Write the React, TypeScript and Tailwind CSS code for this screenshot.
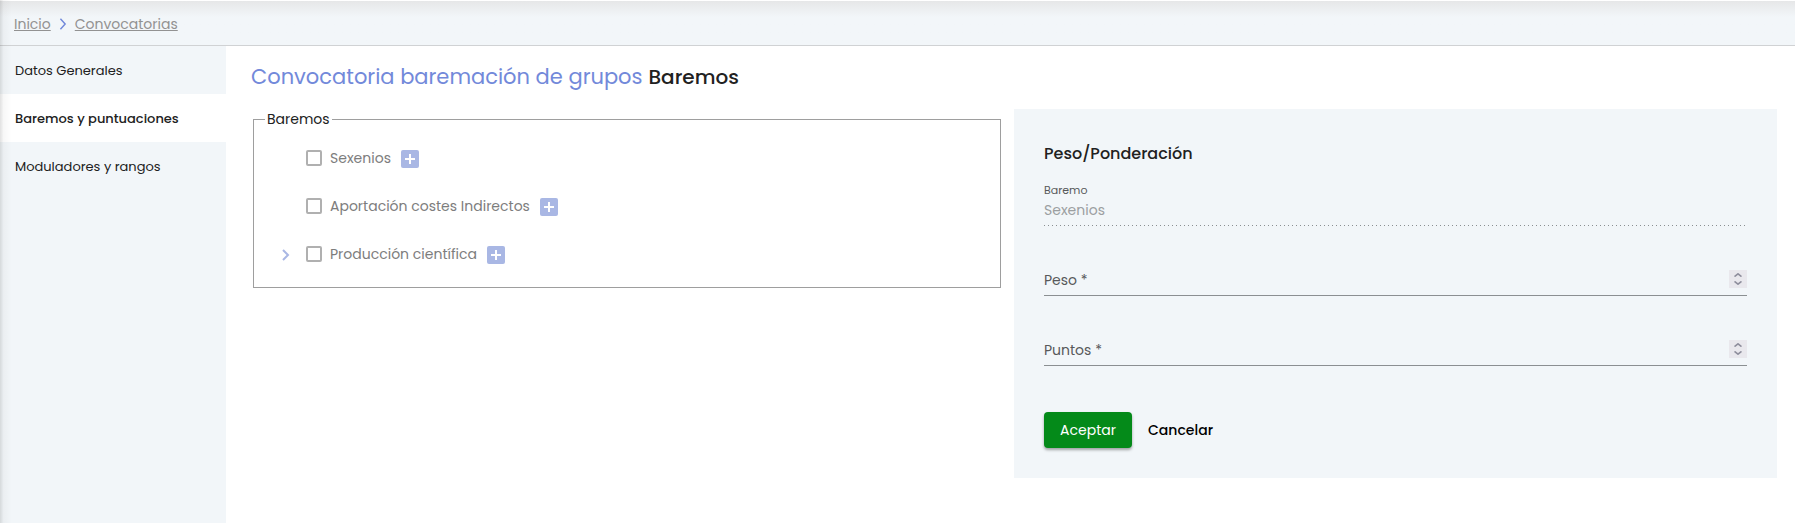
import React from "react";

const sections = [
  { label: "Datos Generales", active: false },
  { label: "Baremos y puntuaciones", active: true },
  { label: "Moduladores y rangos", active: false },
];

const scales = [
  { id: "sexenios", label: "Sexenios", expandable: false },
  { id: "costes", label: "Aportación costes Indirectos", expandable: false },
  { id: "produccion", label: "Producción científica", expandable: true },
];

function Chevron({ className }: { className: string }) {
  return (
    <svg viewBox="0 0 8 14" fill="none" stroke="currentColor" className={className} aria-hidden="true">
      <path d="M1 1l5.5 6L1 13" strokeWidth="1.7" />
    </svg>
  );
}

function TreeRow({ id, label, expandable }: { id: string; label: string; expandable: boolean }) {
  return (
    <li className="flex h-12 items-center">
      <span className="flex w-[41px] justify-center">
        {expandable && (
          <button type="button" aria-label={`Desplegar ${label}`} className="mt-[2px] text-[#a9b7e4]">
            <svg viewBox="0 0 8 12" fill="none" stroke="currentColor" className="h-3 w-2" aria-hidden="true">
              <path d="M1 1l5 5-5 5" strokeWidth="2" />
            </svg>
          </button>
        )}
      </span>
      <input
        id={id}
        type="checkbox"
        className="size-4 appearance-none rounded-[2px] border-2 border-[#b0b0b0] bg-white checked:bg-[#7289da]"
      />
      <label htmlFor={id} className="ml-2 text-[14px] leading-5 text-[#7d7d7d]">
        {label}
      </label>
      <button
        type="button"
        aria-label={`Añadir a ${label}`}
        className="ml-[10px] mt-[2px] flex size-[18px] items-center justify-center rounded-[2px] bg-[#a9b7e4] text-white"
      >
        <svg viewBox="0 0 10 10" stroke="currentColor" className="size-[10px]" aria-hidden="true">
          <path d="M5 0v10M0 5h10" strokeWidth="2" />
        </svg>
      </button>
    </li>
  );
}

function NumberField({ id, label }: { id: string; label: string }) {
  return (
    <div className="flex h-[70px] items-end border-b border-[#8b8f92] pb-[7px]">
      <label htmlFor={id} className="text-[14px] leading-4 text-[#58595b]">
        {label} *
      </label>
      <input
        id={id}
        type="number"
        required
        className="h-4 min-w-0 flex-1 appearance-none bg-transparent px-2 text-[14px] outline-none [appearance:textfield] [&::-webkit-inner-spin-button]:appearance-none"
      />
      <span className="flex size-[18px] flex-col items-center justify-center gap-1 bg-[#e9e8ed] text-[#8f8f9d]">
        <button type="button" aria-label={`Aumentar ${label}`} className="flex">
          <svg viewBox="0 0 8 4" fill="none" stroke="currentColor" className="h-1 w-2" aria-hidden="true">
            <path d="M.5 3.6L4 .8l3.5 2.8" strokeWidth="1.6" />
          </svg>
        </button>
        <button type="button" aria-label={`Reducir ${label}`} className="flex">
          <svg viewBox="0 0 8 4" fill="none" stroke="currentColor" className="h-1 w-2" aria-hidden="true">
            <path d="M.5 .4L4 3.2 7.5.4" strokeWidth="1.6" />
          </svg>
        </button>
      </span>
    </div>
  );
}

export default function App() {
  return (
    <div className="relative flex min-h-screen flex-col bg-white pt-px font-[Poppins,Inter,sans-serif] text-[#212121]">
      <header className="border-b border-[#d0d2d4] bg-linear-to-b from-[#e6e7e8] to-[#f2f6f9] to-[16px]">
        <nav aria-label="Ruta" className="flex h-11 items-center px-[14px] pt-[2px] text-[14px] leading-5 text-[#929292]">
          <a href="#inicio" className="underline underline-offset-1">Inicio</a>
          <Chevron className="mx-2 h-3 w-2 text-[#7289da]" />
          <a href="#convocatorias" className="underline underline-offset-1">Convocatorias</a>
        </nav>
      </header>

      <div className="flex flex-1">
        <aside className="w-[226px] shrink-0 bg-[#f2f6f9]">
          <nav aria-label="Secciones">
            {sections.map((s) => (
              <a
                key={s.label}
                href="#seccion"
                className={
                  s.active
                    ? "flex h-12 items-center bg-white px-[15px] pt-px text-[13px] font-medium"
                    : "flex h-12 items-center px-[15px] pt-px text-[13px]"
                }
              >
                {s.label}
              </a>
            ))}
          </nav>
        </aside>

        <main className="min-w-0 flex-1 pl-[25px] pr-[18px] pt-4">
          <h1 className="flex h-[47px] gap-[6px] text-[20px] font-medium leading-[30px]">
            <span className="text-[21px] font-normal text-[#7289da]">Convocatoria baremación de grupos</span>
            <span>Baremos</span>
          </h1>

          <div className="grid grid-cols-2 items-start">
            <fieldset className="ml-[2px] mr-[13px] border border-[#9e9e9e] px-[11px] pb-[9px]">
              <legend className="px-[2px] text-[14px] leading-5">Baremos</legend>
              <ul className="pt-[5px]">
                {scales.map((s) => (
                  <TreeRow key={s.id} {...s} />
                ))}
              </ul>
            </fieldset>

            <form className="bg-[#f2f6f9] p-[30px]" onSubmit={(e) => e.preventDefault()}>
              <h2 className="pt-px text-[16px] font-medium leading-7">Peso/Ponderación</h2>
              <div className="mt-[14px] flex flex-col bg-[linear-gradient(90deg,#8b8f92_1px,transparent_1px)] bg-[length:4px_1px] bg-bottom-left bg-repeat-x pb-[6px]">
                <label htmlFor="baremo" className="text-[11px] leading-4 text-[#58595b]">Baremo</label>
                <input
                  id="baremo"
                  disabled
                  defaultValue="Sexenios"
                  className="mt-[2px] h-5 bg-transparent text-[14px] leading-5 text-[#9c9fa1]"
                />
              </div>
              <NumberField id="peso" label="Peso" />
              <NumberField id="puntos" label="Puntos" />
              <div className="mt-[46px] flex gap-4 text-[14px]">
                <button type="submit" className="h-9 w-[88px] rounded-[4px] bg-[#048a19] text-white shadow-[0_2px_3px_rgba(0,0,0,0.35)]">
                  Aceptar
                </button>
                <button type="button" className="h-9 font-medium text-black">Cancelar</button>
              </div>
            </form>
          </div>
        </main>
      </div>

      <div className="pointer-events-none absolute inset-y-0 left-0 w-3 bg-linear-to-r from-black/12 via-black/3 via-30% to-transparent" />
    </div>
  );
}
